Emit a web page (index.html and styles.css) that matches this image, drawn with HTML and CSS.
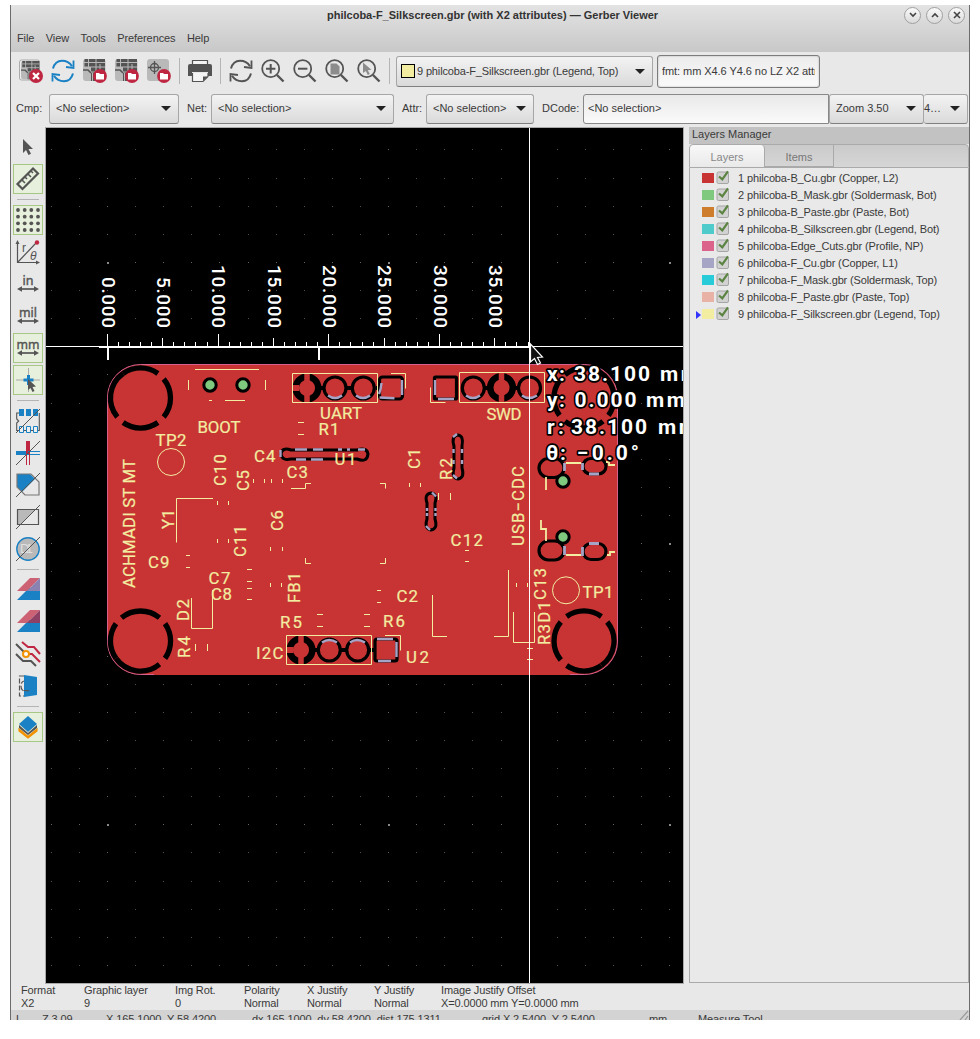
FILE: index.html
```html
<!DOCTYPE html>
<html lang="en">
<head>
<meta charset="utf-8">
<title>Gerber Viewer</title>
<link rel="stylesheet" href="styles.css">
</head>
<body>
<svg class="defs" width="0" height="0">
  <defs>
    <symbol id="gerber" viewBox="0 0 24 24">
      <rect x="0" y="0" width="22.5" height="22" rx="3" fill="#b9b9b9"/>
      <path d="M1.500 0H22V14H13v8H8V8H1.500z" fill="#545454"/>
      <path d="M0 3.500H22M0 8H22M6 13H22M5.500 0V11l4 3v8M13 0V14M17 5v9" fill="none" stroke="#b9b9b9" stroke-width="1"/>
      <path d="M0 11h5l3 3" fill="none" stroke="#545454" stroke-width="1.600"/>
    </symbol>
    <symbol id="folder" viewBox="0 0 14 14"><circle cx="7" cy="7" r="6.900" fill="#bf2641"/><path d="M3 4h3l1 1h4v5.500H3z" fill="#fff"/></symbol>
    <symbol id="refresh" viewBox="0 0 24 24">
      <path d="M2 9.500C3.500 4 7 1.700 11 1.700c4 0 7.500 1.500 10 5.500M22 14.500C20.500 20 17 22.300 13 22.300c-4 0-7.500-1.500-10-5.500" fill="none" stroke="currentColor" stroke-width="2"/>
      <path d="M22.500 1.500V9L15 8M1.500 22.500V15L9 16" fill="none" stroke="currentColor" stroke-width="1.800"/>
    </symbol>
    <symbol id="lens" viewBox="0 0 24 24"><circle cx="9.700" cy="9.700" r="8.500" fill="none" stroke="#545454" stroke-width="1.800"/><path d="M16 16l6.500 6.500" stroke="#545454" stroke-width="2.400"/></symbol>
    <symbol id="hspan" viewBox="0 0 24 6"><path d="M4 3H20" stroke="#545454" stroke-width="1.700"/><path d="M1 3L6 .3V5.700zM23 3L18 .3V5.700z" fill="#545454"/></symbol>
    <symbol id="check" viewBox="0 0 14 14"><rect x="1" y="2" width="11.500" height="11.500" rx="1.500" fill="#d2d2d2" stroke="#a5a5a5"/><path d="M3 6.500l3.300 2.800L12 1.300" fill="none" stroke="#5b8341" stroke-width="2.200"/></symbol>
    <symbol id="ring" viewBox="-34 -34 68 68">
      <g fill="none" stroke="#000" stroke-width="5.300">
        <path d="M-19 -23.200A30 30 0 0 1 19 -23.200M24.500 -17.400A30 30 0 0 1 24.500 17.400M-24.500 -17.400A30 30 0 0 0 -24.500 17.400"/>
        <path d="M19 23.200A30 30 0 0 1 -24.500 17.400"/>
      </g>
    </symbol>
    <symbol id="thermal" viewBox="-16 -16 32 32"><circle r="11.300" fill="none" stroke="#000" stroke-width="6.500"/><path d="M0-15V15" stroke="#c83434" stroke-width="5.500"/></symbol>
  </defs>
</svg>

<div class="window">
  <header class="titlebar">
    <div class="title-row">
      <span class="title">philcoba-F_Silkscreen.gbr (with X2 attributes) — Gerber Viewer</span>
      <div class="controls">
        <span class="control"><svg width="8" height="6"><path d="M1 1l3 3 3-3"/></svg></span>
        <span class="control"><svg width="8" height="6"><path d="M1 5l3-3 3 3"/></svg></span>
        <span class="control"><svg width="8" height="8"><path d="M1 1l6 6M7 1l-6 6"/></svg></span>
      </div>
    </div>
    <nav class="menu"><span>File</span><span>View</span><span>Tools</span><span>Preferences</span><span>Help</span></nav>
  </header>

  <div class="toolbar main-tools">
    <span class="tool"><svg width="24" height="24"><rect x=".5" y="1" width="20" height="20" rx="2" fill="#eee" stroke="#aaa"/><use href="#gerber" x="2" y="2" width="20" height="20"/><circle cx="17" cy="17" r="7" fill="#bf2641"/><path d="M14 14l6 6M20 14l-6 6" stroke="#fff" stroke-width="2.200"/></svg></span>
    <span class="tool blue"><svg width="24" height="24"><use href="#refresh"/></svg></span>
    <span class="tool"><svg width="24" height="24"><use href="#gerber" width="24" height="24"/><use href="#folder" x="10" y="10" width="14" height="14"/></svg></span>
    <span class="tool"><svg width="24" height="24"><use href="#gerber" width="24" height="24"/><use href="#folder" x="10" y="10" width="14" height="14"/></svg></span>
    <span class="tool"><svg width="24" height="24"><rect width="22" height="22" rx="3" fill="#b9b9b9"/><circle cx="7.500" cy="8.500" r="4" fill="none" stroke="#545454" stroke-width="1.300"/><path d="M7.500 2v13M1 8.500h13" stroke="#545454" stroke-width="1.300"/><use href="#folder" x="10" y="10" width="14" height="14"/></svg></span>
    <span class="rule"></span>
    <span class="tool"><svg width="24" height="24"><path d="M4.500 5V1.500h15V5M4.500 14v8.500H15l5-5V14" fill="#f4f4f4" stroke="#545454" stroke-width="1.200"/><path d="M2 5H22q2 0 2 2V17H20V13H4v4H0V7q0-2 2-2z" fill="#545454"/><path d="M15 22v-4.500h5z" fill="#545454"/></svg></span>
    <span class="rule"></span>
    <span class="tool"><svg width="24" height="24"><use href="#refresh"/></svg></span>
    <span class="tool"><svg width="24" height="24"><use href="#lens"/><path d="M5 9.700h9.400M9.700 5v9.400" stroke="#545454" stroke-width="2"/></svg></span>
    <span class="tool"><svg width="24" height="24"><use href="#lens"/><path d="M5 9.700h9.400" stroke="#545454" stroke-width="2"/></svg></span>
    <span class="tool"><svg width="24" height="24"><use href="#lens"/><path d="M5.500 4.500h6l3 3v8h-9z" fill="#8c8c8c"/></svg></span>
    <span class="tool"><svg width="24" height="24"><use href="#lens"/><path d="M6 3.500v10.500l2.800-2 2 4 2-1-2-3.700 3.600-.5z" fill="#8c8c8c"/></svg></span>
    <span class="rule"></span>
    <span class="combo layer-combo"><i class="swatch framed c9"></i>9 philcoba-F_Silkscreen.gbr (Legend, Top)<b class="arrow"></b></span>
    <span class="field"><span>fmt: mm X4.6 Y4.6 no LZ X2 attr</span></span>
  </div>

  <div class="toolbar filters">
    <label class="cmp-label">Cmp:</label><span class="combo cmp">&lt;No selection&gt;<b class="arrow"></b></span>
    <label class="net-label">Net:</label><span class="combo net">&lt;No selection&gt;<b class="arrow"></b></span>
    <label class="attr-label">Attr:</label><span class="combo attr">&lt;No selection&gt;<b class="arrow"></b></span>
    <label class="dcode-label">DCode:</label><span class="dcode">&lt;No selection&gt;</span>
    <span class="combo zoom">Zoom 3.50<b class="arrow"></b></span><span class="combo grid-size">4…<b class="arrow"></b></span>
  </div>

  <main class="workspace">
    <aside class="side-tools">
      <span class="cell"><svg width="24" height="24"><path d="M7 4v14l3-3 2.500 5 2.500-1.300L12.500 14H17z" fill="#545454"/></svg></span>
      <span class="cell on"><svg width="24" height="24"><path d="M1.500 17L17 1.500 22 6.500 6.500 22z" fill="none" stroke="#545454" stroke-width="2.200"/><path d="M6 13l3 3M9 10l2 2M12 7l3 3M15 4l2 2" stroke="#545454" stroke-width="1.600"/></svg></span>
      <span class="hr"></span>
      <span class="cell on"><svg width="24" height="24" fill="#545454"><g id="dotrow"><circle cx="2" cy="2" r="1.900"/><circle cx="8.700" cy="2" r="1.900"/><circle cx="15.300" cy="2" r="1.900"/><circle cx="22" cy="2" r="1.900"/></g><use href="#dotrow" y="6.700"/><use href="#dotrow" y="13.300"/><use href="#dotrow" y="20"/></svg></span>
      <span class="cell"><svg width="24" height="24"><path d="M1.500 23V3M1 22.500H21M1.500 22.500L20 3" fill="none" stroke="#545454" stroke-width="1.200"/><path d="M1.500 0L3.500 4h-4zM24 22.500L20 20.500v4z" fill="#545454"/><circle cx="21" cy="2.500" r="2.200" fill="#bf2641"/><text x="6" y="12" font-size="12" fill="#545454">r</text><text x="14" y="20" font-size="12" font-style="italic" fill="#545454">θ</text></svg></span>
      <span class="cell"><svg width="24" height="24"><text class="unit" x="12" y="13" textLength="11" lengthAdjust="spacingAndGlyphs">in</text><use href="#hspan" y="14" width="24" height="6"/></svg></span>
      <span class="cell"><svg width="24" height="24"><text class="unit" x="12" y="13" textLength="18" lengthAdjust="spacingAndGlyphs">mil</text><use href="#hspan" y="14" width="24" height="6"/></svg></span>
      <span class="cell on"><svg width="24" height="24"><text class="unit" x="12" y="13" textLength="23" lengthAdjust="spacingAndGlyphs">mm</text><use href="#hspan" y="14" width="24" height="6"/></svg></span>
      <span class="cell on"><svg width="24" height="24"><path d="M12.500 0v24M0 12h24" stroke="#aaa"/><path d="M12.500 7v10M7.500 12h10" stroke="#1a81c4" stroke-width="3"/><path d="M12 11v11l2.500-2 2 4 2-1-2-4 3.500-.5z" fill="#545454"/></svg></span>
      <span class="hr"></span>
      <span class="cell"><svg width="24" height="24"><path d="M3 4H0.700V10l2 2-2 2v7.500H23.300V4" fill="none" stroke="#545454" stroke-width="1.100"/><path d="M3 0h5v7H3zM10 0h5v7h-5zM17 0h5v7h-5z" fill="#1a81c4"/><path d="M3.500 17.500h4v6h-4zM10.500 17.500h4v6h-4zM17.500 17.500h4v6h-4z" fill="#eee" stroke="#1a81c4"/><path d="M0 24L24 0" stroke="#545454"/></svg></span>
      <span class="cell"><svg width="24" height="24"><path d="M0 12h13" stroke="#1a81c4" stroke-width="4"/><path d="M12 0v13" stroke="#bf2641" stroke-width="4"/><path d="M12 10.500h12M12 13.500h12" stroke="#1a81c4"/><path d="M10.500 12v12M13.500 12v12" stroke="#bf2641"/><path d="M0 24L24 0" stroke="#545454"/></svg></span>
      <span class="cell"><svg width="24" height="24"><path d="M1 1h13l5 5L6 19l-5-5z" fill="#1a81c4"/><path d="M1 1h14l8 8v13H9l-8-8z" fill="none" stroke="#777" stroke-width="1.200"/><path d="M0 24L24 0" stroke="#545454"/></svg></span>
      <span class="cell"><svg width="24" height="24"><path d="M1 4h19L4 20H1z" fill="#b9b9b9"/><path d="M1.500 4.500h21v15h-21z" fill="none" stroke="#545454" stroke-width="1.200"/><path d="M0 24L24 0" stroke="#545454"/></svg></span>
      <span class="cell"><svg width="24" height="24"><circle cx="12" cy="12" r="11.200" fill="#b9b9b9" stroke="#1a81c4" stroke-width="1.400"/><text x="4" y="16" font-size="13" textLength="13" fill="#e0e0e0">D1</text><path d="M0 24L24 0" stroke="#545454"/></svg></span>
      <span class="hr"></span>
      <span class="cell"><svg width="24" height="24"><path d="M1 22L13 10H24v12z" fill="#1a81c4"/><path d="M1 13L14 0h10L11 13z" fill="#cd6274"/><path d="M24 0v13H11z" fill="#8a83b1"/></svg></span>
      <span class="cell"><svg width="24" height="24"><path d="M1 22L13 10H24v12z" fill="#1a81c4"/><path d="M1 13L14 0h10L11 13z" fill="#cd6274"/><path d="M24 0v13H11z" fill="#8e4065"/></svg></span>
      <span class="cell"><svg width="24" height="24" fill="none" stroke-width="2"><path d="M6 0l6 5h6l6 7M12 12h4l8 8" stroke="#bf2641"/><path d="M0 2l9 9M0 12l7 7h8l5 5" stroke="#545454"/><circle cx="10" cy="12" r="3" stroke="#f39200" fill="#fff"/></svg></span>
      <span class="cell"><svg width="24" height="24"><path d="M8 2H3.500v20H8M9 7q-4 0-4 5t4 5" fill="none" stroke="#545454" stroke-dasharray="5 2" stroke-width="1.200"/><path d="M8 1l13 2v18l-13 2z" fill="#1a81c4"/><path d="M6 16h6l2 1q-5 1-8-1" fill="#545454"/></svg></span>
      <span class="hr"></span>
      <span class="cell on"><svg width="24" height="24"><path d="M3 14l9 7.500 9-7.500v2l-9 7-9-7z" fill="#f39200" stroke="#f39200" stroke-width="1.200"/><path d="M3 10l9 8 9-8v3l-9 7-9-7z" fill="#545454"/><path d="M12 1l9 8-9 8-9-8z" fill="#1a81c4"/></svg></span>
    </aside>

    <svg class="canvas" viewBox="46 128 637 855" width="637" height="855">
      <rect x="46" y="128" width="637" height="855" fill="#000"/>
      <g id="grid-dots" shape-rendering="crispEdges"></g>

      <!-- copper area and board edge -->
      <path d="M107.500 397.500a33 33 0 0 1 33-33H584.500a33 33 0 0 1 33 33V641a33 33 0 0 1-33 33.500H140.500a33 33 0 0 1-33-33.500z" fill="#c83434" stroke="#d8608c"/>
      <path d="M154 674.500H570" stroke="#c83434"/>
      <use href="#ring" x="-34" y="-34" width="68" height="68" transform="translate(140.500 398) rotate(90)"/>
      <use href="#ring" x="-34" y="-34" width="68" height="68" transform="translate(584 398) rotate(180)"/>
      <use href="#ring" x="-34" y="-34" width="68" height="68" transform="translate(140.500 641)"/>
      <use href="#ring" x="-34" y="-34" width="68" height="68" transform="translate(584 641) rotate(-90)"/>

      <!-- header pads -->
      <g fill="none" stroke="#000" stroke-width="3.200">
        <use href="#thermal" x="291" y="372" width="32" height="32"/>
        <use href="#thermal" x="485.500" y="371.500" width="32" height="32"/>
        <use href="#thermal" x="285" y="634" width="32" height="32"/>
        <path d="M292 388h7M286.500 650h7" stroke="#c83434" stroke-width="6"/>
        <circle cx="335" cy="388" r="11"/><circle cx="363.300" cy="388" r="11"/><circle cx="473.300" cy="388" r="11"/><circle cx="529.500" cy="388" r="11"/><circle cx="329.300" cy="650" r="11"/><circle cx="357.700" cy="650" r="11"/>
        <rect x="379.500" y="377" width="23" height="22" rx="3"/><rect x="434.500" y="377" width="22" height="22" rx="1"/><rect x="375" y="639" width="22" height="22" rx="2"/>
        <path d="M319 388h5M347 388h5M485 388h5M513 388h5M313 650h5M341 650h5M369 650h5M376 388h4" stroke-width="4"/>
      </g>
      <g fill="none" stroke="#a6a4c6" stroke-width="2.400">
        <path d="M328 395.500q7 5 14 0M356 395.500q7 5 14 0M466 395.500q7 5 14 0M522 395.500q7 5 15 0M322 642.500q7-5 15 0M350 642.500q7-5 15 0"/>
        <path d="M381.500 383q-.5 6-2.500 11M379.500 397.500l15 .8M402 380v15M435 380v15M438 399h16M377 639h16M396.500 642v15M378 661h13"/>
      </g>

      <!-- slots -->
      <g fill="none" stroke="#000" stroke-width="3">
        <path d="M291 450q-9-3-10 4 1 7 10 5h66q10 4 11-5-1-7-11-4z"/>
        <path d="M454 468V446q-3-10 4-11 6 1 4 11v22q3 10-4 11-7-1-4-11z"/>
        <path d="M427 519v-16q-3-9 4-10 7 1 4 10v16q3 10-4 11-7-1-4-11z"/>
      </g>
      <g stroke="#a6a4c6" stroke-width="2.400" fill="none">
        <path d="M280.500 450v7M295 449.500h12M313 449.500h10M338 449.500h4M347 449.500h3M358 449.500h7M296 459.500h10M311 459.500h12M453.500 449v4M453.500 460v4M462 449v4M462 460v4M453 437l4-3M453 475l4 3.500M427 508v3M427 513v3M435.500 508v3M435.500 513v3M432 492.500l4 4M426 526l4 4"/>
      </g>

      <!-- USB connector -->
      <g fill="none" stroke="#000" stroke-width="3.200">
        <rect x="539" y="458.500" width="25" height="19" rx="9.500"/><rect x="583" y="458.500" width="23" height="15.500" rx="7.700"/>
        <rect x="539" y="541" width="25" height="19" rx="9.500"/><rect x="583" y="543.500" width="23" height="16" rx="8"/>
      </g>
      <path d="M564.500 463v8M582.500 463v7M589 474h10M564.500 546v9M582.500 547v9M589 543.500h10" stroke="#a6a4c6" stroke-width="2.800" fill="none"/>
      <g fill="#7fc97f" stroke="#000" stroke-width="3"><circle cx="210" cy="385" r="6.200"/><circle cx="243" cy="385" r="6.200"/><circle cx="563" cy="481" r="6.200"/><circle cx="563" cy="537" r="6.200"/></g>

      <!-- silkscreen outlines -->
      <g class="silk-line">
        <path d="M195 369.500h64M188.500 380v10M265.500 380v10M209 400.500h3M225 400.500h20M298 422.500h6M298 434.500h6"/>
        <path d="M292.500 373.500h85v29h-85zM391 373.500h14.500v15M430.500 387.500v15h15M459.500 372.500h85v30h-85z"/>
        <path d="M286.500 635.500h85v29h-85zM385 635.500h15.500v15"/>
        <circle cx="171" cy="462" r="13.500"/><circle cx="566" cy="590.300" r="13.500"/>
        <path d="M213 498.500h-36.500v44M217.500 501v4M228.500 501v4M217.500 539v4M228.500 539v4M253.500 479v4M264.500 479v4M271.500 479v4M282.500 479v4"/>
        <path d="M291 488.500h14.500v-5h5.500M380 483.500h5.500v5M305.500 558v5.500h5.500M380 563.500h5.500v-5.500M270.500 547v4M282.500 547v4M270.500 583v4M281.500 583v4"/>
        <path d="M186 555.500h4M186 567.500h4M247 569.500h5M247 581.500h5M247 588.500h5M247 599.500h5M191.500 598v30.500h21V590M195.500 644v7M207.500 644v7"/>
        <path d="M317 614.500h6M317 626.500h6M364 614.500h6M364 626.500h6M377 590.500h4M377 602.500h4M465 550.500h4M465 561.500h4M409.500 483v4M420.500 483v4M438.500 493v7M450.500 493v7"/>
        <path d="M432.500 595v41.500h14.500M494 636.500h14.500V570M516.500 583v4M527.500 583v4M513.500 612v30.500h21V612M527 648.500h6M527 659.500h6"/>
        <path stroke-width="1.800" d="M566 463h15M606 462h3v3h6M546 477v13M541 520v9h5v12M566 555h15M607 555h3v-3h5"/>
      </g>
      <g id="silk-text" class="silk-text"></g>

      <g id="ruler" class="ruler"></g>
      <path d="M46 346.500H683M529.500 128V983" stroke="#fff"/>
      <path d="M530.500 344v18l4-3.500 3 6 3-1.500-3-5.500 5-.5z" fill="#111" stroke="#fff" stroke-width="1.200"/>
      <g id="readout" class="readout"></g>
    </svg>

    <section class="layers">
      <h2 class="caption">Layers Manager</h2>
      <div class="tabs"><span class="tab active">Layers</span><span class="tab">Items</span></div>
      <ul class="list">
        <li><i class="mark"></i><i class="swatch c1"></i><svg width="14" height="14"><use href="#check"/></svg>1 philcoba-B_Cu.gbr (Copper, L2)</li>
        <li><i class="mark"></i><i class="swatch c2"></i><svg width="14" height="14"><use href="#check"/></svg>2 philcoba-B_Mask.gbr (Soldermask, Bot)</li>
        <li><i class="mark"></i><i class="swatch c3"></i><svg width="14" height="14"><use href="#check"/></svg>3 philcoba-B_Paste.gbr (Paste, Bot)</li>
        <li><i class="mark"></i><i class="swatch c4"></i><svg width="14" height="14"><use href="#check"/></svg>4 philcoba-B_Silkscreen.gbr (Legend, Bot)</li>
        <li><i class="mark"></i><i class="swatch c5"></i><svg width="14" height="14"><use href="#check"/></svg>5 philcoba-Edge_Cuts.gbr (Profile, NP)</li>
        <li><i class="mark"></i><i class="swatch c6"></i><svg width="14" height="14"><use href="#check"/></svg>6 philcoba-F_Cu.gbr (Copper, L1)</li>
        <li><i class="mark"></i><i class="swatch c7"></i><svg width="14" height="14"><use href="#check"/></svg>7 philcoba-F_Mask.gbr (Soldermask, Top)</li>
        <li><i class="mark"></i><i class="swatch c8"></i><svg width="14" height="14"><use href="#check"/></svg>8 philcoba-F_Paste.gbr (Paste, Top)</li>
        <li><i class="mark current"></i><i class="swatch c9"></i><svg width="14" height="14"><use href="#check"/></svg>9 philcoba-F_Silkscreen.gbr (Legend, Top)</li>
      </ul>
    </section>
  </main>

  <div class="info">
    <span>Format<br>X2</span><span>Graphic layer<br>9</span><span>Img Rot.<br>0</span><span>Polarity<br>Normal</span><span>X Justify<br>Normal</span><span>Y Justify<br>Normal</span><span>Image Justify Offset<br>X=0.0000 mm Y=0.0000 mm</span>
  </div>
  <footer class="status">
    <span>L</span><span>Z 3.09</span><span>X 165.1000&nbsp; Y 58.4200</span><span>dx 165.1000&nbsp; dy 58.4200&nbsp; dist 175.1311</span><span>grid X 2.5400&nbsp; Y 2.5400</span><span>mm</span><span>Measure Tool</span>
    <svg class="grip" width="10" height="10"><path d="M1 10L9 1M6 10l3-4" stroke="#999" stroke-width="1.200"/></svg>
  </footer>
</div>
<script src="board.js"></script>
</body>
</html>
```
FILE: styles.css
```css
* { box-sizing: border-box; }
body { margin: 0; background: #fff; color: #3a3a3a; font: 11px/13px "Liberation Sans", Arial, sans-serif; }
svg { display: block; flex: none; }
.defs { position: absolute; }
.window { width: 960px; height: 1015px; margin: 5px 0 0 10px; display: flex; flex-direction: column; overflow: hidden; background: #e8e8e8; border-left: 1px solid #6c6c6c; border-right: 1px solid #6c6c6c; }

.titlebar { height: 47px; flex: none; background: linear-gradient(#e3e3e3, #c8c8c8); }
.title-row { display: grid; grid-template-columns: 1fr; height: 20px; align-items: center; }
.title, .controls { grid-area: 1 / 1; }
.title { padding-left: 316px; font-weight: bold; color: #333; white-space: nowrap; }
.controls { display: flex; gap: 5px; justify-self: end; padding-right: 4px; }
.control { width: 17px; height: 17px; border: 1px solid #a0a0a0; border-radius: 50%; background: linear-gradient(#fafafa, #dadada); display: flex; align-items: center; justify-content: center; }
.control svg { fill: none; stroke: #444; stroke-width: 1.6px; }
.menu { display: flex; gap: 11.5px; padding: 7px 0 0 6px; letter-spacing: -.1px; }

.toolbar { display: flex; align-items: center; height: 38px; flex: none; }
.main-tools { padding-left: 4px; }
.tool { width: 32px; display: flex; justify-content: center; color: #545454; flex: none; }
.blue { color: #1a81c4; }
.rule { width: 1px; height: 26px; margin: 0 4px; background: #b5b5b5; flex: none; }
.combo { display: flex; align-items: center; height: 31px; flex: none; border: 1px solid #a6a6a6; border-bottom-color: #808080; border-radius: 3px; background: linear-gradient(#f3f3f3, #dadada); padding: 0 7px 0 6px; white-space: nowrap; }
.arrow { margin-left: auto; border: 5px solid transparent; border-top-color: #222; border-bottom: 0; }
.layer-combo { width: 257px; margin-left: 2px; padding-left: 4px; letter-spacing: -.14px; }
.layer-combo .swatch { margin-right: 2px; }
.field { width: 163px; height: 33px; margin-left: 4px; padding: 9px 4px 0; border: 1px solid #7c7c7c; border-radius: 3px; background: linear-gradient(#ececec, #fafafa); box-shadow: inset 0 0 2px #aaa; letter-spacing: -.06px; }
.field span { display: block; overflow: hidden; white-space: nowrap; }
.filters { padding: 0 0 1px 5px; white-space: nowrap; }
.filters .combo { height: 30px; padding-bottom: 1px; }
.filters label { flex: none; padding-bottom: 1px; }
.filters .cmp-label { width: 33px; }
.cmp { width: 130px; }
.filters .net-label { width: 32px; padding-left: 8px; }
.net { width: 183px; }
.filters .attr-label { width: 32px; padding-left: 8px; }
.attr { width: 108px; }
.filters .dcode-label { width: 49px; padding-left: 8px; }
.dcode { width: 246px; height: 30px; flex: none; padding: 7px 4px; border: 1px solid #888; border-radius: 3px 0 0 3px; background: linear-gradient(#e9e9e9, #fafafa); }
.zoom { width: 95px; }
.filters .grid-size { width: 44px; padding-left: 0; border-left: 0; }

.workspace { display: flex; height: 855px; flex: none; }
.side-tools { display: flex; flex-direction: column; width: 35px; flex: none; padding: 3px 0 0 2px; border-right: 1px solid #b0b0b0; }
.cell { display: flex; flex: none; align-items: center; justify-content: center; width: 30px; height: 30px; margin: 1px 0; }
.cell svg { overflow: visible; }
.on { background: #e7f0dc; border: 1px solid #a6c884; }
.hr { flex: none; width: 22px; height: 1px; margin: 4px; background: #b4b4b4; }
.unit { font: 13px "Noto Sans", sans-serif; text-anchor: middle; fill: #545454; stroke: #545454; stroke-width: .4px; }
.canvas { outline: 1px solid #aaa; }

.silk-line { fill: none; stroke: #f2eda1; stroke-width: 1px; }
.silk-text { font: 16.8px Roboto, sans-serif; fill: #f2eda1; stroke: #f2eda1; stroke-width: .2px; }
.ruler { font: 500 19px Roboto, sans-serif; fill: #fff; shape-rendering: crispEdges; }
.readout { font: bold 21px Roboto, sans-serif; fill: #fff; stroke: #000; stroke-width: 3.5px; paint-order: stroke; stroke-linejoin: round; }

.layers { width: 281px; margin: -1px 0 0 6px; display: flex; flex-direction: column; }
.caption { margin: 0; height: 17px; padding: 1px 0 0 3px; font-size: 11px; font-weight: normal; background: #c2c2c2; }
.tabs { display: flex; height: 24px; flex: none; background: linear-gradient(#cacaca, #d6d6d6); border: 1px solid #aaa; border-radius: 4px 4px 0 0; }
.tab { width: 69px; padding-top: 6px; text-align: center; color: #777; border-right: 1px solid #aaa; border-bottom: 1px solid #aaa; }
.active { width: 75px; color: #888; background: linear-gradient(#f8f8f8, #e9e9e9); border-bottom: 0; border-radius: 4px 4px 0 0; }
.list { flex: 1; margin: 0; padding: 2px 0 0 6px; list-style: none; background: #e9e9e9; border: 1px solid #aaa; border-top: 0; letter-spacing: -.13px; }
.list li { display: flex; align-items: center; height: 17px; white-space: nowrap; }
.list svg { margin: -3px 8px 0 2px; }
.mark { width: 6px; height: 8px; }
.current { border: 4px solid transparent; border-left: 5px solid #3333ff; border-right: 0; }
.swatch { width: 12px; height: 10px; margin-top: -1px; display: block; }
.framed { width: 14px; height: 14px; border: 1px solid #000; }
.c1 { background: #c83434; } .c2 { background: #7fc97f; } .c3 { background: #ce7d2c; }
.c4 { background: #4fcbcb; } .c5 { background: #db628b; } .c6 { background: #a7a5c6; }
.c7 { background: #28ccd9; } .c8 { background: #e8b2a7; } .c9 { background: #f2eda1; }

.info { display: grid; grid-template-columns: 63px 91px 69px 63px 67px 67px 1fr; height: 27px; flex: none; padding: 1px 0 0 10px; white-space: nowrap; letter-spacing: -.13px; }
.status { display: grid; grid-template-columns: 26px 64px 146px 230px 167px 49px 1fr 10px; height: 10px; flex: none; padding: 3px 0 0 5px; background: #d3d3d3; white-space: nowrap; overflow: hidden; letter-spacing: -.1px; }
.grip { margin-top: -3px; }
```
FILE: board.js
```js
const NS = "http://www.w3.org/2000/svg";
const byId = (id) => document.getElementById(id);

function add(parent, name, attrs, text) {
  const el = document.createElementNS(NS, name);
  for (const key in attrs) el.setAttribute(key, attrs[key]);
  if (text) el.textContent = text;
  parent.appendChild(el);
}

// text spaced out to a given length, turned by an angle about its start point
function fitted(parent, text, x, y, length, angle) {
  add(parent, "text", {
    transform: `translate(${x} ${y}) rotate(${angle || 0})`,
    textLength: length,
    lengthAdjust: "spacing"
  }, text);
}

// background grid, every tenth point brighter
for (let i = -2; i < 21; i++) {
  for (let j = -4; j < 26; j++) {
    const major = i % 10 === 0 && j % 10 === 0;
    const axis = i % 10 === 0 || j % 10 === 0;
    add(byId("grid-dots"), "rect", {
      x: Math.floor(107.4 + i * 28.12), y: Math.floor(262.4 + j * 28.12),
      width: major ? 2 : 1, height: major ? 2 : 1,
      fill: major ? "#888" : axis ? "#666" : "#505050"
    });
  }
}

// ruler: one tick per millimetre
const ruler = byId("ruler");
add(ruler, "rect", { x: 99, y: 346, width: 431, height: 2 });
for (let mm = 0; mm <= 38; mm++) {
  const h = mm % 10 === 0 ? 12 : mm % 5 === 0 ? 8 : 4;
  add(ruler, "rect", { x: Math.floor(107.4 + mm * 11.07), y: 346 - h, width: 1, height: h });
}
add(ruler, "rect", { x: 107, y: 346, width: 2, height: 14 });
add(ruler, "rect", { x: 318, y: 346, width: 2, height: 14 });
for (let n = 0; n < 8; n++) {
  const label = (n * 5).toFixed(3);
  const length = n < 2 ? 51 : 63;
  fitted(ruler, label, 101.5 + n * 55.35, 328 - length, length, 90);
}

const silk = byId("silk-text");
[
  ["BOOT", 197.5, 433, 43], ["TP2", 155.5, 446, 31], ["UART", 320, 419, 42],
  ["R1", 318.5, 435, 21], ["C4", 254, 462, 21.5], ["C3", 286.5, 478, 21.5],
  ["U1", 334.5, 465, 22], ["SWD", 486.5, 420, 35], ["C12", 450.5, 546, 32.5],
  ["C2", 396.5, 602, 21.5], ["R6", 383, 627, 22], ["R5", 280, 628, 22],
  ["U2", 406, 663, 23], ["I2C", 256, 659, 27.5], ["C9", 148, 568, 21.5],
  ["C7", 208.5, 584, 22], ["C8", 211, 600, 21], ["TP1", 582.5, 598, 31],
  ["ACHMADI ST MT", 135, 588, 129, -90], ["C10", 226, 486, 32, -90],
  ["C5", 249, 491, 21, -90], ["Y1", 174, 529, 20, -90], ["C11", 245.5, 557, 32, -90],
  ["C6", 283, 531, 21, -90], ["FB1", 300, 603, 31, -90], ["D2", 189, 621, 22, -90],
  ["R4", 189.5, 658, 22, -90], ["C1", 420, 469, 21, -90], ["R2", 451.5, 480, 22, -90],
  ["USB−CDC", 524, 546, 80, -90], ["C13", 546, 600, 32, -90], ["R3D1", 550, 645, 44, -90]
].forEach((t) => fitted(silk, ...t));

const readout = byId("readout");
[
  ["x:", 547, 381, 18], ["38.100", 574, 381, 76], ["mm", 660, 381, 39],
  ["y:", 547, 407, 18], ["0.000", 574.5, 407, 62], ["mm", 646, 407, 39],
  ["r:", 547, 434, 17], ["38.100", 571, 434, 76], ["mm", 658, 434, 39],
  ["θ:", 546, 460, 20], ["−0.0°", 577, 460, 62]
].forEach((t) => fitted(readout, ...t));
```
